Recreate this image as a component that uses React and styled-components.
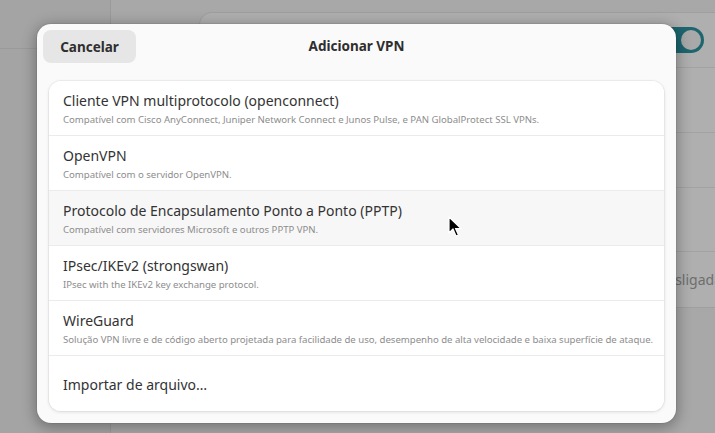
import styled, { createGlobalStyle } from 'styled-components';

const GlobalStyle = createGlobalStyle`
  html, body {
    margin: 0;
    padding: 0;
    width: 715px;
    height: 433px;
    overflow: hidden;
  }
  body {
    font-family: "Noto Sans", "Open Sans", sans-serif;
  }
`;

const Screen = styled.div`
  position: relative;
  width: 715px;
  height: 433px;
  display: flex;
  background: #a7a7a7;
  overflow: hidden;
`;

const Sidebar = styled.div`
  width: 110px;
  flex-shrink: 0;
  background: #a4a4a4;
  border-right: 1px solid #9a9a9a;
  display: flex;
  flex-direction: column;
`;

const SidebarHeader = styled.div`
  height: 48px;
  border-bottom: 1px solid #9a9a9a;
`;

const Main = styled.div`
  flex: 1;
  padding: 13px 0 0 89px;
  background: #a8a8a8;
`;

const BgCard = styled.div`
  width: 522px;
  flex-shrink: 0;
  background: #afafaf;
  border-radius: 12px 0 0 12px;
  box-shadow: 0 0 0 1px rgba(0, 0, 0, 0.05);
  display: flex;
  flex-direction: column;
`;

const BgRow = styled.div`
  height: ${(p) => p.$h}px;
  border-bottom: 1px solid #a3a3a3;
  display: flex;
  align-items: center;
  justify-content: flex-end;
  padding-right: ${(p) => (p.$pad ? p.$pad : 0)}px;
  font-size: 14px;
  color: #6e6e6e;
  white-space: nowrap;
  &:last-child {
    border-bottom: none;
  }
`;

const Switch = styled.div`
  width: 48px;
  height: 26px;
  border-radius: 13px;
  background: #1d6670;
  display: flex;
  align-items: center;
  justify-content: flex-end;
  padding-right: 3px;
  box-sizing: border-box;
`;

const Knob = styled.div`
  width: 20px;
  height: 20px;
  border-radius: 50%;
  background: #a9a9a9;
`;

const Dialog = styled.div`
  position: absolute;
  left: 37px;
  top: 24px;
  width: 639px;
  height: 399px;
  box-sizing: border-box;
  background: #fafafa;
  border-radius: 14px;
  box-shadow: 0 3px 14px 2px rgba(0, 0, 0, 0.3), 0 0 0 1px rgba(0, 0, 0, 0.06);
  padding: 6px 12px 12px 6px;
  display: flex;
  flex-direction: column;
`;

const Header = styled.div`
  position: relative;
  height: 51px;
  display: flex;
  align-items: flex-start;
`;

const Button = styled.button`
  width: 93px;
  height: 33px;
  border: none;
  border-radius: 8px;
  background: #e6e6e6;
  color: #2e2e2e;
  font-family: inherit;
  font-size: 13.5px;
  font-weight: 700;
  padding: 0;
`;

const Title = styled.div`
  position: absolute;
  left: 6px;
  right: 0;
  top: 7px;
  text-align: center;
  font-size: 13.5px;
  font-weight: 700;
  color: #2e2e2e;
  pointer-events: none;
`;

const List = styled.div`
  margin-left: 6px;
  flex: 1;
  background: #ffffff;
  border-radius: 12px;
  box-shadow: 0 0 0 1px rgba(0, 0, 0, 0.04), 0 1px 3px 1px rgba(0, 0, 0, 0.07);
  display: flex;
  flex-direction: column;
  overflow: hidden;
`;

const Row = styled.div`
  height: 55px;
  box-sizing: border-box;
  padding: 2px 14px 0;
  display: flex;
  flex-direction: column;
  justify-content: center;
  gap: 3px;
  background: ${(p) => (p.$hover ? '#f7f7f7' : '#ffffff')};
  border-bottom: 1px solid #ebebeb;
  &:last-child {
    border-bottom: none;
  }
`;

const RowTitle = styled.div`
  font-size: 14px;
  color: #333333;
  line-height: 18px;
  white-space: nowrap;
`;

const RowSub = styled.div`
  font-size: 9.65px;
  color: #8d8d8d;
  line-height: 13px;
  white-space: nowrap;
  letter-spacing: -0.03px;
`;

const Cursor = styled.svg`
  position: absolute;
  left: 448px;
  top: 216px;
`;

const items = [
  {
    title: 'Cliente VPN multiprotocolo (openconnect)',
    sub: 'Compatível com Cisco AnyConnect, Juniper Network Connect e Junos Pulse, e PAN GlobalProtect SSL VPNs.',
  },
  { title: 'OpenVPN', sub: 'Compatível com o servidor OpenVPN.' },
  {
    title: 'Protocolo de Encapsulamento Ponto a Ponto (PPTP)',
    sub: 'Compatível com servidores Microsoft e outros PPTP VPN.',
    hover: true,
  },
  { title: 'IPsec/IKEv2 (strongswan)', sub: 'IPsec with the IKEv2 key exchange protocol.' },
  {
    title: 'WireGuard',
    sub: 'Solução VPN livre e de código aberto projetada para facilidade de uso, desempenho de alta velocidade e baixa superfície de ataque.',
  },
  { title: 'Importar de arquivo…' },
];

const App = () => {
  return (
    <Screen>
      <GlobalStyle />
      <Sidebar>
        <SidebarHeader />
      </Sidebar>
      <Main>
        <BgCard>
          <BgRow $h={54} $pad={18}>
            <Switch>
              <Knob />
            </Switch>
          </BgRow>
          <BgRow $h={64} />
          <BgRow $h={54} />
          <BgRow $h={63} />
          <BgRow $h={55}>Desligada</BgRow>
        </BgCard>
      </Main>
      <Dialog>
        <Header>
          <Button>Cancelar</Button>
          <Title>Adicionar VPN</Title>
        </Header>
        <List>
          {items.map((item) => (
            <Row key={item.title} $hover={item.hover}>
              <RowTitle>{item.title}</RowTitle>
              {item.sub && <RowSub>{item.sub}</RowSub>}
            </Row>
          ))}
        </List>
      </Dialog>
      <Cursor width="14" height="22" viewBox="0 0 14 22">
        <path d="M1 1 L1 17 L5 13 L8 20 L10.5 19 L7.5 12.5 L13 12.5 Z" fill="#000" stroke="#fff" strokeWidth="1.2" strokeLinejoin="round" />
      </Cursor>
    </Screen>
  );
};

export default App;
